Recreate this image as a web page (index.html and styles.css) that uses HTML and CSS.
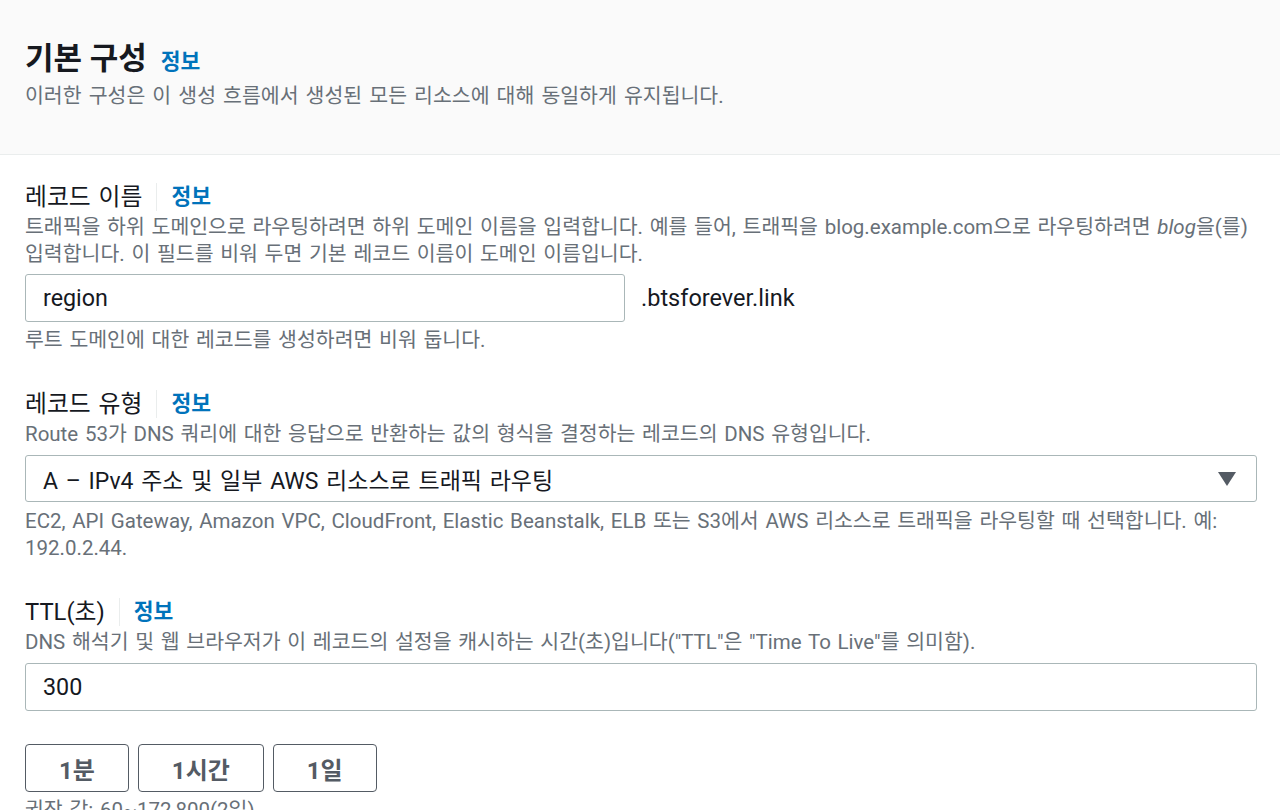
FILE: index.html
```html
<!DOCTYPE html>
<html lang="ko">

<head>
    <meta charset="UTF-8">
    <meta name="viewport" content="width=device-width, initial-scale=1.0">
    <title>레코드 생성</title>
    <link rel="stylesheet" href="styles.css">
</head>

<body>

    <div class="panel-header">
        <h2 class="panel-title">기본 구성 <a class="info-link" href="#">정보</a></h2>
        <p class="panel-desc">이러한 구성은 이 생성 흐름에서 생성된 모든 리소스에 대해 동일하게 유지됩니다.</p>
    </div>

    <div class="panel-body">
        <div class="field">
            <div class="label-row">
                <span class="label">레코드 이름</span>
                <span class="divider"></span>
                <a class="info-link" href="#">정보</a>
            </div>
            <p class="desc">트래픽을 하위 도메인으로 라우팅하려면 하위 도메인 이름을 입력합니다. 예를 들어, 트래픽을 blog.example.com으로 라우팅하려면 <i>blog</i>을(를) 입력합니다. 이 필드를 비워 두면 기본 레코드 이름이 도메인 이름입니다.</p>
            <div class="input-row">
                <input class="text-input name-input" type="text" value="region">
                <span class="suffix">.btsforever.link</span>
            </div>
            <p class="hint">루트 도메인에 대한 레코드를 생성하려면 비워 둡니다.</p>
        </div>

        <div class="field">
            <div class="label-row">
                <span class="label">레코드 유형</span>
                <span class="divider"></span>
                <a class="info-link" href="#">정보</a>
            </div>
            <p class="desc">Route 53가 DNS 쿼리에 대한 응답으로 반환하는 값의 형식을 결정하는 레코드의 DNS 유형입니다.</p>
            <div class="select">
                <span>A – IPv4 주소 및 일부 AWS 리소스로 트래픽 라우팅</span>
                <svg class="caret" width="18" height="14" viewBox="0 0 18 14">
                    <path d="M0 0 H18 L9 14 Z" fill="#545b64" />
                </svg>
            </div>
            <p class="hint select-hint">EC2, API Gateway, Amazon VPC, CloudFront, Elastic Beanstalk, ELB 또는 S3에서 AWS 리소스로 트래픽을 라우팅할 때 선택합니다. 예: 192.0.2.44.</p>
        </div>

        <div class="field">
            <div class="label-row">
                <span class="label">TTL(초)</span>
                <span class="divider"></span>
                <a class="info-link" href="#">정보</a>
            </div>
            <p class="desc">DNS 해석기 및 웹 브라우저가 이 레코드의 설정을 캐시하는 시간(초)입니다("TTL"은 "Time To Live"를 의미함).</p>
            <input class="text-input" type="text" value="300">
            <div class="button-row">
                <button class="preset">1분</button>
                <button class="preset">1시간</button>
                <button class="preset">1일</button>
            </div>
            <p class="hint">권장 값: 60~172,800(2일)</p>
        </div>
    </div>

</body>

</html>
```

FILE: styles.css
```css
body {
    font-family: Roboto, "Noto Sans CJK KR", sans-serif;
    margin: 0;
    padding: 0;
    background-color: #ffffff;
    color: #16191f;
    overflow: hidden;
}

.panel-header {
    background-color: #fafafa;
    border-bottom: 1px solid #eaeded;
    padding: 39px 25px 44px;
}

.panel-title {
    display: flex;
    align-items: baseline;
    gap: 14px;
    height: 40px;
    margin: 0;
    font-size: 31px;
    line-height: 40px;
    font-weight: 700;
}

.panel-desc {
    margin: 4px 0 0;
    font-size: 20.5px;
    line-height: 27px;
    color: #687078;
    word-spacing: 2px;
}

.info-link {
    color: #0073bb;
    font-size: 21.5px;
    line-height: 30px;
    font-weight: 700;
    text-decoration: none;
}

.panel-body {
    padding: 24px 23px 0 25px;
}

.field {
    margin-bottom: 32px;
}

.label-row {
    display: flex;
    align-items: center;
    height: 30px;
    padding-top: 3px;
}

.label {
    font-size: 23.8px;
    line-height: 30px;
    word-spacing: 2px;
}

.divider {
    width: 1px;
    height: 28px;
    background-color: #eaeded;
    margin: 0 14px;
}

.desc,
.hint {
    margin: 2px 0 0;
    font-size: 20.5px;
    line-height: 27px;
    color: #687078;
    word-spacing: 1.6px;
}

.hint {
    margin-top: 5px;
}

.select-hint {
    margin-top: 6px;
}

.input-row {
    display: flex;
    align-items: center;
    gap: 16px;
    margin-top: 6px;
}

.text-input {
    display: block;
    box-sizing: border-box;
    width: 100%;
    height: 48px;
    margin-top: 7px;
    padding: 0 17px;
    border: 1px solid #aab7b8;
    border-radius: 3px;
    font-family: Roboto, "Noto Sans CJK KR", sans-serif;
    font-size: 23.3px;
    color: #16191f;
    outline: none;
}

.name-input {
    width: 600px;
    margin-top: 0;
}

.suffix {
    font-size: 23.5px;
}

.select {
    display: flex;
    align-items: center;
    justify-content: space-between;
    box-sizing: border-box;
    height: 47px;
    margin-top: 7px;
    padding: 0 20px 0 17px;
    border: 1px solid #aab7b8;
    border-radius: 3px;
    font-size: 23px;
    word-spacing: 2px;
}

.caret {
    display: block;
}

.button-row {
    display: flex;
    gap: 9px;
    margin-top: 33px;
}

.preset {
    box-sizing: border-box;
    height: 48px;
    padding: 0 33px;
    background-color: #ffffff;
    border: 1px solid #545b64;
    border-radius: 4px;
    font-family: Roboto, "Noto Sans CJK KR", sans-serif;
    font-size: 24px;
    font-weight: 700;
    color: #545b64;
}
```
